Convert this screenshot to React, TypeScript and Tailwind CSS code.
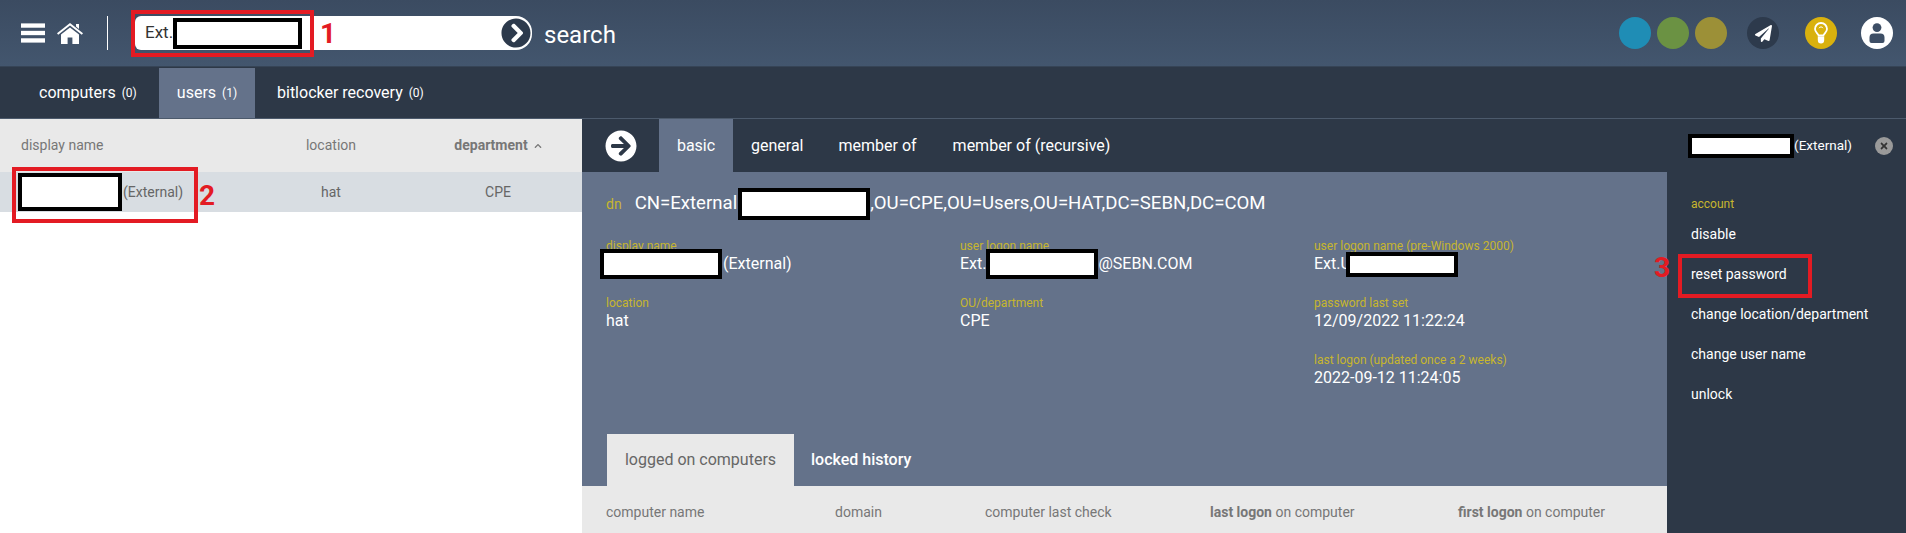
import React from 'react';
import { FaChevronCircleRight, FaArrowCircleRight, FaPaperPlane, FaTimes, FaChevronUp } from 'react-icons/fa';

// black framed white box that hides a name in the screenshot
function Redacted({ className }: { className: string }) {
  return <span className={`inline-block shrink-0 bg-white border-4 border-black ${className}`} />;
}

function Field({ label, children }: { label: string; children?: React.ReactNode }) {
  return (
    <div className="h-[57px]">
      <div className="text-[12px] leading-[14px] text-[#c7b62e]">{label}</div>
      <div className="flex items-center h-[22px] text-[16px] text-white">{children}</div>
    </div>
  );
}

function MenuIcon() {
  return (
    <svg className="ml-[21px] shrink-0" width="24" height="20" viewBox="0 0 25 20" fill="#fff">
      <rect width="25" height="4.5" />
      <rect y="7.75" width="25" height="4.5" />
      <rect y="15.5" width="25" height="4.5" />
    </svg>
  );
}

function HomeIcon() {
  return (
    <svg className="ml-[12px] shrink-0" width="26" height="21" viewBox="0 0 26 21" fill="#fff">
      <path d="M19 1h3v5l-3-2.4z" />
      <path d="M13 0 26 10.2l-1.2 1.5L13 2.5 1.2 11.7 0 10.2z" />
      <path d="M13 4.6 22 11.6V21h-6.6v-6.5h-4.8V21H4v-9.4z" />
    </svg>
  );
}

function BulbIcon() {
  return (
    <svg width="14" height="22" viewBox="0 0 14 22" fill="none">
      <path d="M4.6 13.5C4.2 11.6 1 10.2 1 7a6 6 0 0 1 12 0c0 3.2-3.2 4.6-3.6 6.5z" stroke="#fff" strokeWidth="1.8" />
      <path d="M5 6.2a2.2 2.2 0 0 1 4 0" stroke="#fff" strokeWidth="1" />
      <path d="M3.8 14.5h6.4V18a3.2 3.6 0 0 1-6.4 0z" fill="#fff" />
    </svg>
  );
}

function UserIcon() {
  return (
    <svg width="16" height="20" viewBox="0 0 16 20" fill="#3d4e65">
      <circle cx="8" cy="4.6" r="4.4" />
      <path d="M4.5 10.5h7A4 4 0 0 1 15.5 14.5V18a2 2 0 0 1-2 2h-11a2 2 0 0 1-2-2v-3.5a4 4 0 0 1 4-4z" />
    </svg>
  );
}

const menu = ['disable', 'reset password', 'change location/department', 'change user name', 'unlock'];

export default function App() {
  return (
    <div className="relative h-[533px] w-[1906px] overflow-hidden bg-white font-['Roboto',sans-serif] text-[16px]">
      {/* top bar */}
      <div className="flex h-[67px] items-center bg-gradient-to-b from-[#3b4b61] to-[#43566e] border-b border-[#364456]">
        <MenuIcon />
        <HomeIcon />
        <div className="ml-[24px] h-[34px] w-px bg-white" />
        <div className="ml-[27px] flex h-[34px] w-[397px] items-center rounded-l-md rounded-r-[16px] bg-white pl-[10px] pr-[1px] text-[17px] text-[#333]">
          <span>Ext.</span>
          <Redacted className="h-[31px] w-[129px]" />
          <FaChevronCircleRight className="ml-auto text-[#2d3a4c]" size={30} />
        </div>
        <span className="ml-[12px] mt-[3px] text-[24px] text-white">search</span>
        <div className="ml-auto flex items-center pr-[13px]">
          <div className="h-8 w-8 rounded-full bg-[#1f8db5]" />
          <div className="ml-[6px] h-8 w-8 rounded-full bg-[#6b9243]" />
          <div className="ml-[6px] h-8 w-8 rounded-full bg-[#9c9037]" />
          <div className="ml-[20px] flex h-8 w-8 items-center justify-center rounded-full bg-[#2d3a4c]">
            <FaPaperPlane className="text-white" size={17} />
          </div>
          <div className="ml-[26px] flex h-8 w-8 items-center justify-center rounded-full bg-[#d9b10e]">
            <BulbIcon />
          </div>
          <div className="ml-[24px] flex h-8 w-8 items-center justify-center rounded-full bg-white">
            <UserIcon />
          </div>
        </div>
      </div>

      {/* result tabs */}
      <div className="flex h-[52px] items-stretch border-b border-[#4c5a6c] bg-[#2d3847] pt-px text-white">
        <div className="flex w-[159px] items-center pl-[39px]">
          <span>computers</span>
          <span className="ml-[6px] text-[12px]">(0)</span>
        </div>
        <div className="flex w-[96px] items-center justify-center bg-[#64728a]">
          <span>users</span>
          <span className="ml-[6px] text-[12px]">(1)</span>
        </div>
        <div className="flex items-center pl-[22px]">
          <span>bitlocker recovery</span>
          <span className="ml-[6px] text-[12px]">(0)</span>
        </div>
      </div>

      <div className="flex h-[414px]">
        {/* users list */}
        <div className="w-[582px] shrink-0 text-[#666]">
          <div className="grid h-[53px] grid-cols-[264px_134px_184px] items-center bg-[#e9e9e9] text-[14px] text-[#777]">
            <span className="pl-[21px]">display name</span>
            <span className="text-center">location</span>
            <span className="flex items-center justify-center pl-[16px] font-bold">
              department
              <FaChevronUp className="ml-[6px]" size={8} />
            </span>
          </div>
          <div className="grid h-[40px] grid-cols-[264px_134px_184px] items-center bg-[#d8dde2] text-[14px]">
            <span className="flex items-center pl-[18px]">
              <Redacted className="h-[38px] w-[104px]" />
              <span className="ml-[1px]">(External)</span>
            </span>
            <span className="text-center">hat</span>
            <span className="pl-[16px] text-center">CPE</span>
          </div>
        </div>

        {/* user detail */}
        <div className="flex min-w-0 flex-1 flex-col">
          <div className="flex h-[53px] shrink-0 items-stretch bg-[#2d3847] text-white">
            <div className="flex w-[77px] items-center justify-center">
              <FaArrowCircleRight size={32} />
            </div>
            <div className="flex w-[74px] items-center justify-center bg-[#64728a] pt-px">basic</div>
            <div className="ml-[18px] flex items-center pt-px">general</div>
            <div className="ml-[35px] flex items-center pt-px">member of</div>
            <div className="ml-[36px] flex items-center pt-px">member of (recursive)</div>
            <div className="ml-auto flex items-center pr-[13px]">
              <Redacted className="h-[24px] w-[106px]" />
              <span className="text-[13.5px]">(External)</span>
              <div className="ml-[23px] flex h-[18px] w-[18px] items-center justify-center rounded-full bg-[#9a9a9a] text-[#333]">
                <FaTimes size={10} />
              </div>
            </div>
          </div>

          <div className="flex min-h-0 flex-1">
            <div className="flex w-[1085px] shrink-0 flex-col bg-[#64728a]">
              <div className="flex h-[262px] shrink-0 flex-col pl-[24px]">
                <div className="mt-[16px] flex h-[32px] items-center">
                  <span className="text-[14px] text-[#c7b62e]">dn</span>
                  <span className="ml-[13px] text-[18.6px] text-white">CN=External</span>
                  <Redacted className="ml-[1px] h-[32px] w-[132px]" />
                  <span className="text-[18.6px] text-white">,OU=CPE,OU=Users,OU=HAT,DC=SEBN,DC=COM</span>
                </div>
                <div className="mt-[19px] grid grid-cols-[354px_354px_1fr]">
                  <Field label="display name">
                    <Redacted className="-ml-[6px] h-[30px] w-[122px]" />
                    <span className="ml-[1px]">(External)</span>
                  </Field>
                  <Field label="user logon name">
                    <span>Ext.</span>
                    <Redacted className="h-[30px] w-[112px]" />
                    <span>@SEBN.COM</span>
                  </Field>
                  <Field label="user logon name (pre-Windows 2000)">
                    <span>Ext.U</span>
                    <Redacted className="-ml-[5px] h-[25px] w-[112px]" />
                  </Field>
                  <Field label="location">hat</Field>
                  <Field label="OU/department">CPE</Field>
                  <Field label="password last set">12/09/2022 11:22:24</Field>
                  <div />
                  <div />
                  <Field label="last logon (updated once a 2 weeks)">2022-09-12 11:24:05</Field>
                </div>
              </div>
              <div className="flex h-[52px] shrink-0 items-stretch pl-[25px]">
                <div className="flex w-[187px] items-center justify-center bg-[#e9e9e9] text-[#666]">logged on computers</div>
                <div className="ml-[17px] flex items-center font-medium text-white">locked history</div>
              </div>
              <div className="grid flex-1 grid-cols-[229px_150px_225px_248px_1fr] items-start bg-[#e9e9e9] pl-[24px] pt-[16px] text-[14px] text-[#777]">
                <span>computer name</span>
                <span>domain</span>
                <span>computer last check</span>
                <span><b className="font-bold">last logon</b> on computer</span>
                <span><b className="font-bold">first logon</b> on computer</span>
              </div>
            </div>

            {/* actions */}
            <div className="flex-1 bg-[#2d3847] pl-[24px] pt-[25px] text-[14px] text-white">
              <div className="text-[12px] leading-[14px] text-[#c7b62e]">account</div>
              <div className="mt-[3px] flex flex-col">
                {menu.map((item) => (
                  <div key={item} className="flex h-[40px] items-center">{item}</div>
                ))}
              </div>
            </div>
          </div>
        </div>
      </div>

      {/* red annotations drawn over the screenshot */}
      <div className="absolute left-[131px] top-[10px] h-[47px] w-[183px] border-4 border-[#e31b23]" />
      <span className="absolute left-[320px] top-[17px] text-[28px] font-bold leading-[33px] text-[#e31b23]">1</span>
      <div className="absolute left-[12px] top-[167px] h-[56px] w-[186px] border-4 border-[#e31b23]" />
      <span className="absolute left-[199px] top-[179px] text-[28px] font-bold leading-[33px] text-[#e31b23]">2</span>
      <div className="absolute left-[1678px] top-[254px] h-[44px] w-[134px] border-4 border-[#e31b23]" />
      <span className="absolute left-[1654px] top-[251px] text-[28px] font-bold leading-[33px] text-[#e31b23]">3</span>
    </div>
  );
}
